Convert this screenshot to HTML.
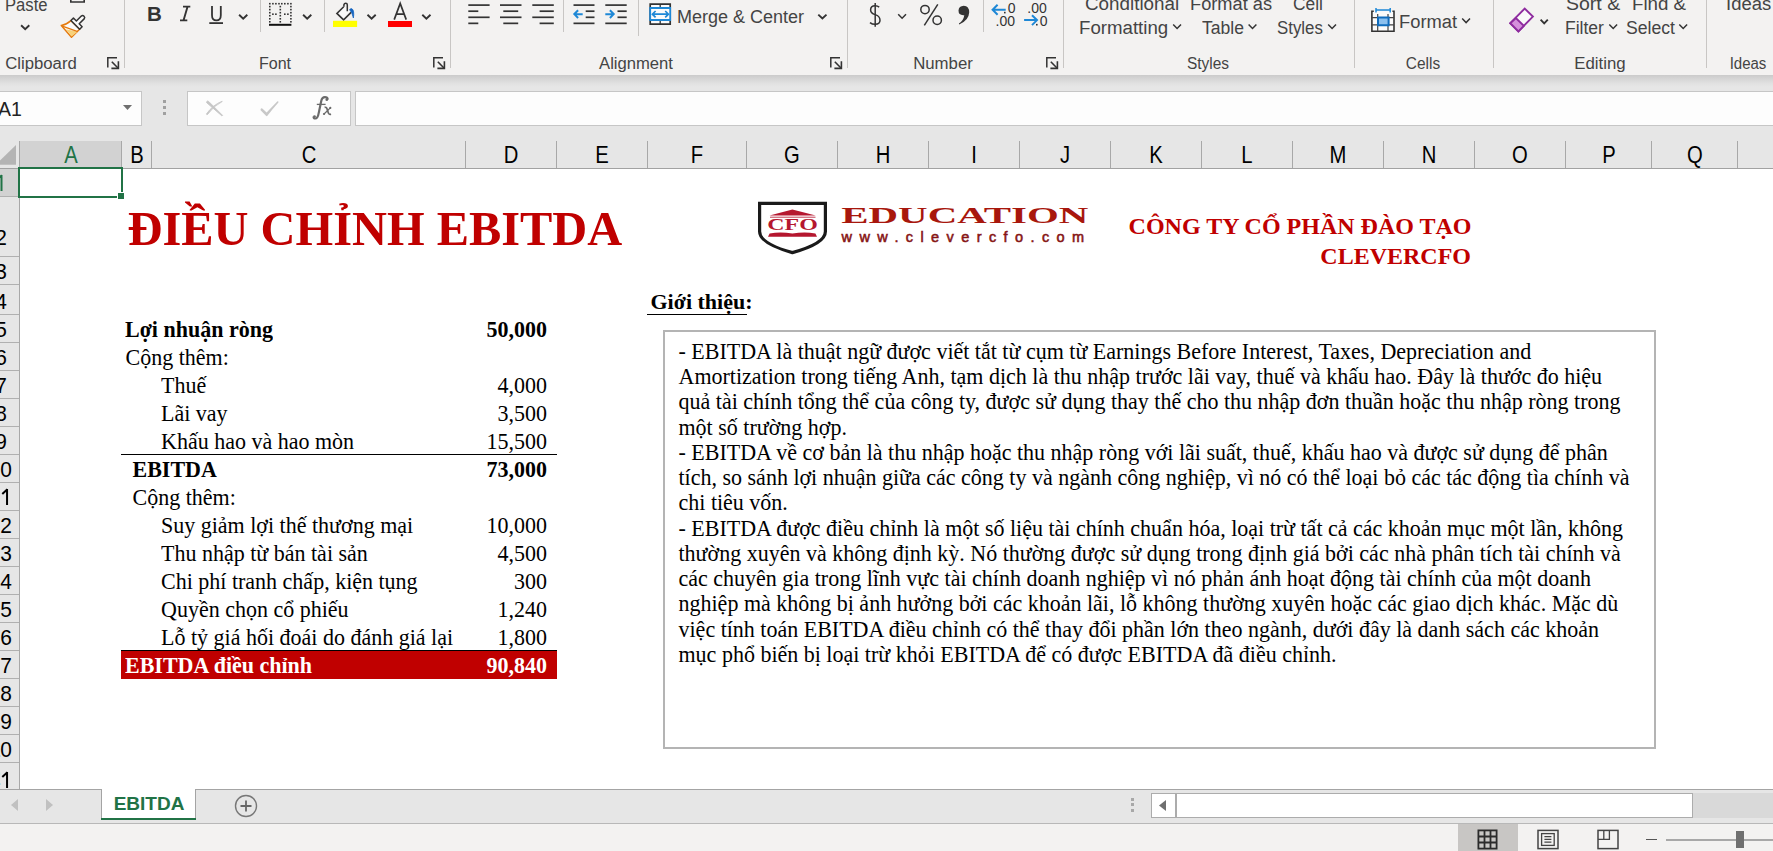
<!DOCTYPE html>
<html><head><meta charset="utf-8"><title>EBITDA</title>
<style>
html,body{margin:0;padding:0;}
body{width:1773px;height:851px;position:relative;overflow:hidden;background:#fff;font-family:"Liberation Sans",sans-serif;}
</style></head><body>
<div style="position:absolute;left:0px;top:0px;width:1773px;height:75px;background:#f3f2f1;"></div>
<div style="position:absolute;left:0px;top:75px;width:1773px;height:66px;background:linear-gradient(#cbcbcb 0px,#d3d3d3 3px,#dbdbdb 6px,#e2e2e2 9px,#e6e6e6 12px,#e6e6e6 100%);"></div>
<div style="position:absolute;left:124px;top:0px;width:1px;height:68px;background:#c8c6c4;"></div>
<div style="position:absolute;left:450px;top:0px;width:1px;height:68px;background:#c8c6c4;"></div>
<div style="position:absolute;left:847px;top:0px;width:1px;height:68px;background:#c8c6c4;"></div>
<div style="position:absolute;left:1063px;top:0px;width:1px;height:68px;background:#c8c6c4;"></div>
<div style="position:absolute;left:1354px;top:0px;width:1px;height:68px;background:#c8c6c4;"></div>
<div style="position:absolute;left:1493px;top:0px;width:1px;height:68px;background:#c8c6c4;"></div>
<div style="position:absolute;left:1706px;top:0px;width:1px;height:68px;background:#c8c6c4;"></div>
<div style="position:absolute;left:260px;top:0px;width:1px;height:32px;background:#c8c6c4;"></div>
<div style="position:absolute;left:324px;top:0px;width:1px;height:32px;background:#c8c6c4;"></div>
<div style="position:absolute;left:563px;top:0px;width:1px;height:32px;background:#c8c6c4;"></div>
<div style="position:absolute;left:983px;top:0px;width:1px;height:32px;background:#c8c6c4;"></div>
<div style="position:absolute;left:638px;top:0px;width:1px;height:36px;background:#c8c6c4;"></div>
<div style="position:absolute;left:-459px;width:1000px;text-align:center;top:63.66px;line-height:0;white-space:pre;font-family:'Liberation Sans', sans-serif;font-size:16px;color:#444444;font-weight:normal;font-style:normal;transform:scale(1.0453,1);transform-origin:center 5.54px;">Clipboard</div>
<div style="position:absolute;left:-225px;width:1000px;text-align:center;top:63.66px;line-height:0;white-space:pre;font-family:'Liberation Sans', sans-serif;font-size:16px;color:#444444;font-weight:normal;font-style:normal;transform:scale(1.0031,1);transform-origin:center 5.54px;">Font</div>
<div style="position:absolute;left:136px;width:1000px;text-align:center;top:63.66px;line-height:0;white-space:pre;font-family:'Liberation Sans', sans-serif;font-size:16px;color:#444444;font-weight:normal;font-style:normal;transform:scale(1.0388,1);transform-origin:center 5.54px;">Alignment</div>
<div style="position:absolute;left:442.5px;width:1000px;text-align:center;top:63.66px;line-height:0;white-space:pre;font-family:'Liberation Sans', sans-serif;font-size:16px;color:#444444;font-weight:normal;font-style:normal;transform:scale(1.0481,1);transform-origin:center 5.54px;">Number</div>
<div style="position:absolute;left:707.5px;width:1000px;text-align:center;top:63.66px;line-height:0;white-space:pre;font-family:'Liberation Sans', sans-serif;font-size:16px;color:#444444;font-weight:normal;font-style:normal;transform:scale(0.9656,1);transform-origin:center 5.54px;">Styles</div>
<div style="position:absolute;left:923px;width:1000px;text-align:center;top:63.66px;line-height:0;white-space:pre;font-family:'Liberation Sans', sans-serif;font-size:16px;color:#444444;font-weight:normal;font-style:normal;transform:scale(0.9656,1);transform-origin:center 5.54px;">Cells</div>
<div style="position:absolute;left:1099.5px;width:1000px;text-align:center;top:63.66px;line-height:0;white-space:pre;font-family:'Liberation Sans', sans-serif;font-size:16px;color:#444444;font-weight:normal;font-style:normal;transform:scale(1.05,1);transform-origin:center 5.54px;">Editing</div>
<div style="position:absolute;left:1248px;width:1000px;text-align:center;top:63.66px;line-height:0;white-space:pre;font-family:'Liberation Sans', sans-serif;font-size:16px;color:#444444;font-weight:normal;font-style:normal;transform:scale(0.9375,1);transform-origin:center 5.54px;">Ideas</div>
<div style="position:absolute;left:5px;top:4.74px;line-height:0;white-space:pre;font-family:'Liberation Sans', sans-serif;font-size:17.5px;color:#444444;font-weight:normal;font-style:normal;transform:scale(0.95,1);transform-origin:left 6.06px;">Paste</div>
<div style="position:absolute;left:147px;top:13.70px;line-height:0;white-space:pre;font-family:'Liberation Sans', sans-serif;font-size:20.5px;color:#333;font-weight:bold;font-style:normal;">B</div>
<div style="position:absolute;left:677px;top:16.76px;line-height:0;white-space:pre;font-family:'Liberation Sans', sans-serif;font-size:18px;color:#444444;font-weight:normal;font-style:normal;">Merge &amp; Center</div>
<div style="position:absolute;left:1085px;top:3.56px;line-height:0;white-space:pre;font-family:'Liberation Sans', sans-serif;font-size:18px;color:#444444;font-weight:normal;font-style:normal;transform:scale(1.046,1);transform-origin:left 6.24px;">Conditional</div>
<div style="position:absolute;left:1079px;top:27.56px;line-height:0;white-space:pre;font-family:'Liberation Sans', sans-serif;font-size:18px;color:#444444;font-weight:normal;font-style:normal;transform:scale(1.036,1);transform-origin:left 6.24px;">Formatting</div>
<div style="position:absolute;left:1190px;top:3.56px;line-height:0;white-space:pre;font-family:'Liberation Sans', sans-serif;font-size:18px;color:#444444;font-weight:normal;font-style:normal;transform:scale(1.013,1);transform-origin:left 6.24px;">Format as</div>
<div style="position:absolute;left:1202px;top:27.56px;line-height:0;white-space:pre;font-family:'Liberation Sans', sans-serif;font-size:18px;color:#444444;font-weight:normal;font-style:normal;transform:scale(0.976,1);transform-origin:left 6.24px;">Table</div>
<div style="position:absolute;left:1293px;top:3.56px;line-height:0;white-space:pre;font-family:'Liberation Sans', sans-serif;font-size:18px;color:#444444;font-weight:normal;font-style:normal;transform:scale(0.964,1);transform-origin:left 6.24px;">Cell</div>
<div style="position:absolute;left:1277px;top:27.56px;line-height:0;white-space:pre;font-family:'Liberation Sans', sans-serif;font-size:18px;color:#444444;font-weight:normal;font-style:normal;transform:scale(0.935,1);transform-origin:left 6.24px;">Styles</div>
<div style="position:absolute;left:1399px;top:21.76px;line-height:0;white-space:pre;font-family:'Liberation Sans', sans-serif;font-size:18px;color:#444444;font-weight:normal;font-style:normal;transform:scale(1.018,1);transform-origin:left 6.24px;">Format</div>
<div style="position:absolute;left:1566px;top:3.76px;line-height:0;white-space:pre;font-family:'Liberation Sans', sans-serif;font-size:18px;color:#444444;font-weight:normal;font-style:normal;transform:scale(1.083,1);transform-origin:left 6.24px;">Sort &amp;</div>
<div style="position:absolute;left:1565px;top:27.56px;line-height:0;white-space:pre;font-family:'Liberation Sans', sans-serif;font-size:18px;color:#444444;font-weight:normal;font-style:normal;transform:scale(0.974,1);transform-origin:left 6.24px;">Filter</div>
<div style="position:absolute;left:1632px;top:3.76px;line-height:0;white-space:pre;font-family:'Liberation Sans', sans-serif;font-size:18px;color:#444444;font-weight:normal;font-style:normal;transform:scale(1.04,1);transform-origin:left 6.24px;">Find &amp;</div>
<div style="position:absolute;left:1626px;top:27.56px;line-height:0;white-space:pre;font-family:'Liberation Sans', sans-serif;font-size:18px;color:#444444;font-weight:normal;font-style:normal;transform:scale(0.979,1);transform-origin:left 6.24px;">Select</div>
<div style="position:absolute;left:1726px;top:3.76px;line-height:0;white-space:pre;font-family:'Liberation Sans', sans-serif;font-size:18px;color:#444444;font-weight:normal;font-style:normal;transform:scale(1.025,1);transform-origin:left 6.24px;">Ideas</div>
<svg style="position:absolute;left:0;top:0" width="1773" height="80" viewBox="0 0 1773 80"><path d="M107.8 67.6 V57.8 H117.0" fill="none" stroke="#333" stroke-width="1.5" /><path d="M111.8 61.8 L118.0 68" fill="none" stroke="#333" stroke-width="1.6" /><path d="M118.39999999999999 61.3 V68.4 H111.39999999999999" fill="none" stroke="#333" stroke-width="1.6" /><path d="M433.8 67.6 V57.8 H443.0" fill="none" stroke="#333" stroke-width="1.5" /><path d="M437.8 61.8 L444.0 68" fill="none" stroke="#333" stroke-width="1.6" /><path d="M444.40000000000003 61.3 V68.4 H437.40000000000003" fill="none" stroke="#333" stroke-width="1.6" /><path d="M830.8 67.6 V57.8 H840.0" fill="none" stroke="#333" stroke-width="1.5" /><path d="M834.8 61.8 L841.0 68" fill="none" stroke="#333" stroke-width="1.6" /><path d="M841.4 61.3 V68.4 H834.4" fill="none" stroke="#333" stroke-width="1.6" /><path d="M1046.8 67.6 V57.8 H1056.0" fill="none" stroke="#333" stroke-width="1.5" /><path d="M1050.8 61.8 L1057.0 68" fill="none" stroke="#333" stroke-width="1.6" /><path d="M1057.3999999999999 61.3 V68.4 H1050.3999999999999" fill="none" stroke="#333" stroke-width="1.6" /><path d="M21.1 25.2 L25.200000000000003 29.099999999999998 L29.3 25.2" fill="none" stroke="#333" stroke-width="1.9" stroke-linecap="butt" stroke-linejoin="miter"/><path d="M70.8 0 V2 H84.2 V0" fill="none" stroke="#333" stroke-width="1.6" /><path d="M61.3 25.4 Q66 24.8 71 20.6 L79.6 29.3 L71.5 37.2 Z" fill="#fbfbfb" stroke="#e57a0e" stroke-width="1.5" stroke-linejoin="round"/><path d="M66 29.2 L77.6 31.8 L71.5 36.4 Z" fill="#f8d27a" stroke="none" stroke-width="0" /><path d="M62.3 26.2 L77.8 31.6" fill="none" stroke="#e57a0e" stroke-width="1.4" /><path d="M70.95 20.55 L73.42 18.08 L76.36 21.02 L81.31 16.07 A2 2 0 0 1 84.13 18.89 L79.18 23.84 L82.12 26.78 L79.65 29.25 Z" fill="#fbfbfb" stroke="#333" stroke-width="1.5" stroke-linejoin="round"/><path d="M183 6.6 H190.3 M180 20.4 H187.3 M187.6 6.6 L183.5 20.4" fill="none" stroke="#333" stroke-width="1.9" /><path d="M212 6 V15.2 Q212 20.4 216.4 20.4 Q220.8 20.4 220.8 15.2 V6" fill="none" stroke="#333" stroke-width="1.8" /><rect x="209.3" y="22.2" width="13.7" height="1.8" fill="#333"/><path d="M239.1 14.7 L243.2 18.599999999999998 L247.29999999999998 14.7" fill="none" stroke="#333" stroke-width="1.9" stroke-linecap="butt" stroke-linejoin="miter"/><rect x="269.0" y="2.9" width="1.6" height="1.6" fill="#333"/><rect x="272.09999999999997" y="2.9" width="1.6" height="1.6" fill="#333"/><rect x="275.09999999999997" y="2.9" width="1.6" height="1.6" fill="#333"/><rect x="278.2" y="2.9" width="1.6" height="1.6" fill="#333"/><rect x="281.0" y="2.9" width="1.6" height="1.6" fill="#333"/><rect x="284.0" y="2.9" width="1.6" height="1.6" fill="#333"/><rect x="287.09999999999997" y="2.9" width="1.6" height="1.6" fill="#333"/><rect x="290.09999999999997" y="2.9" width="1.6" height="1.6" fill="#333"/><rect x="269.0" y="5.8" width="1.6" height="1.6" fill="#333"/><rect x="290.1" y="5.8" width="1.6" height="1.6" fill="#333"/><rect x="279.5" y="5.8" width="1.6" height="1.6" fill="#333"/><rect x="269.0" y="8.799999999999999" width="1.6" height="1.6" fill="#333"/><rect x="290.1" y="8.799999999999999" width="1.6" height="1.6" fill="#333"/><rect x="279.5" y="8.799999999999999" width="1.6" height="1.6" fill="#333"/><rect x="269.0" y="11.899999999999999" width="1.6" height="1.6" fill="#333"/><rect x="290.1" y="11.899999999999999" width="1.6" height="1.6" fill="#333"/><rect x="279.5" y="11.899999999999999" width="1.6" height="1.6" fill="#333"/><rect x="269.0" y="14.899999999999999" width="1.6" height="1.6" fill="#333"/><rect x="290.1" y="14.899999999999999" width="1.6" height="1.6" fill="#333"/><rect x="279.5" y="14.899999999999999" width="1.6" height="1.6" fill="#333"/><rect x="269.0" y="18.0" width="1.6" height="1.6" fill="#333"/><rect x="290.1" y="18.0" width="1.6" height="1.6" fill="#333"/><rect x="279.5" y="18.0" width="1.6" height="1.6" fill="#333"/><rect x="269.0" y="21.0" width="1.6" height="1.6" fill="#333"/><rect x="290.1" y="21.0" width="1.6" height="1.6" fill="#333"/><rect x="279.5" y="21.0" width="1.6" height="1.6" fill="#333"/><rect x="272.09999999999997" y="13.4" width="1.6" height="1.6" fill="#333"/><rect x="275.09999999999997" y="13.4" width="1.6" height="1.6" fill="#333"/><rect x="284.0" y="13.4" width="1.6" height="1.6" fill="#333"/><rect x="287.09999999999997" y="13.4" width="1.6" height="1.6" fill="#333"/><rect x="269" y="23.8" width="22.4" height="2" fill="#111"/><path d="M303.1 14.7 L307.20000000000005 18.599999999999998 L311.3 14.7" fill="none" stroke="#333" stroke-width="1.9" stroke-linecap="butt" stroke-linejoin="miter"/><path d="M343.7 6.7 L336.9 13.4 L343.6 19.9 L351.1 12.4" fill="#f9f9f9" stroke="#333" stroke-width="1.6" stroke-linejoin="miter"/><path d="M343.9 6.8 V4.8 Q344.3 3.2 345.7 3.2 Q347.3 3.2 347.3 4.8 V11.3" fill="none" stroke="#333" stroke-width="1.5" /><path d="M349.6 9.6 Q350.5 8.3 352 8.8 Q354.5 10.5 353.4 18 Q352.3 12.5 349.6 9.6 Z" fill="#1565c0" stroke="#1565c0" stroke-width="0.8" /><rect x="333" y="20.8" width="24.1" height="6.2" fill="#ffff00"/><path d="M367.5 14.7 L371.6 18.599999999999998 L375.7 14.7" fill="none" stroke="#333" stroke-width="1.9" stroke-linecap="butt" stroke-linejoin="miter"/><path d="M394.2 19.6 L400.2 3.4 L406.2 19.6 M396.4 14.1 H404" fill="none" stroke="#333" stroke-width="1.7" /><rect x="388" y="21" width="24" height="6" fill="#ff0000"/><path d="M422.3 14.7 L426.40000000000003 18.599999999999998 L430.5 14.7" fill="none" stroke="#333" stroke-width="1.9" stroke-linecap="butt" stroke-linejoin="miter"/><rect x="468.3" y="4.25" width="21.3" height="1.7" fill="#333"/><rect x="468.3" y="10.35" width="10" height="1.7" fill="#333"/><rect x="468.3" y="16.45" width="21.3" height="1.7" fill="#333"/><rect x="468.3" y="22.5" width="10" height="1.7" fill="#333"/><rect x="500" y="4.25" width="21.5" height="1.7" fill="#333"/><rect x="503.3" y="10.35" width="14.899999999999999" height="1.7" fill="#333"/><rect x="500" y="16.45" width="21.5" height="1.7" fill="#333"/><rect x="503.3" y="22.5" width="14.899999999999999" height="1.7" fill="#333"/><rect x="532.3" y="4.25" width="21.5" height="1.7" fill="#333"/><rect x="539.5999999999999" y="10.35" width="14.2" height="1.7" fill="#333"/><rect x="532.3" y="16.45" width="21.5" height="1.7" fill="#333"/><rect x="539.5999999999999" y="22.5" width="14.2" height="1.7" fill="#333"/><rect x="573.5" y="4.25" width="21" height="1.7" fill="#333"/><rect x="585.7" y="10.35" width="8.8" height="1.7" fill="#333"/><rect x="585.7" y="16.45" width="8.8" height="1.7" fill="#333"/><rect x="573.5" y="22.5" width="21" height="1.7" fill="#333"/><path d="M582.7 14.2 H574.3 M578.1 10.2 L574.3 14.1 L578.1 18" fill="none" stroke="#1e88d6" stroke-width="2" /><rect x="605.3" y="4.25" width="21.4" height="1.7" fill="#333"/><rect x="617.5" y="10.35" width="9.2" height="1.7" fill="#333"/><rect x="617.5" y="16.45" width="9.2" height="1.7" fill="#333"/><rect x="605.3" y="22.5" width="21.4" height="1.7" fill="#333"/><path d="M605.3 14.2 H613.5 M609.9 10.2 L613.6999999999999 14.1 L609.9 18" fill="none" stroke="#1e88d6" stroke-width="2" /><path d="M650.2 4.2 H670.2 V24.2 H650.2 Z" fill="#fbfbfb" stroke="#333" stroke-width="1.7" /><path d="M660.2 4.2 V7.5 M660.2 20.5 V24.2" fill="none" stroke="#333" stroke-width="1.3" /><path d="M650.2 8 H670.2 V20 H650.2 Z" fill="#fbfbfb" stroke="#1e88d6" stroke-width="1.8" /><path d="M652.6 14.2 H668 M655.6 11 L652.4 14.2 L655.6 17.4 M665.2 11 L668.4 14.2 L665.2 17.4" fill="none" stroke="#1e88d6" stroke-width="1.7" /><path d="M818.3 14.6 L822.4 18.5 L826.5 14.6" fill="none" stroke="#333" stroke-width="1.9" stroke-linecap="butt" stroke-linejoin="miter"/><path d="M875.2 3 V26.7" fill="none" stroke="#333" stroke-width="1.5" /><path d="M879.2 7.2 Q877.5 5.8 875.2 5.8 Q870.6 5.8 870.6 10 Q870.6 13.2 875.2 14.6 Q880 16 880 20.3 Q880 24.3 875.2 24.3 Q872 24.3 870 22.6" fill="none" stroke="#333" stroke-width="1.5" /><path d="M898.2 14.2 L902.1 18.2 L906.0 14.2" fill="none" stroke="#333" stroke-width="1.5" stroke-linecap="butt" stroke-linejoin="miter"/><circle cx="925" cy="9.6" r="4.2" fill="none" stroke="#333" stroke-width="1.5"/><circle cx="937.2" cy="20.2" r="4.2" fill="none" stroke="#333" stroke-width="1.5"/><path d="M937.8 4.4 L924.3 25.4" fill="none" stroke="#333" stroke-width="1.5" /><path d="M963.8 5.8 Q969.2 6 969.2 12.5 Q968.8 20.5 959.2 24.4 L958.9 23.6 Q963.5 20.5 964.3 15.2 Q958.5 15.8 958.5 10.6 Q958.8 6 963.8 5.8 Z" fill="#333" stroke="none" stroke-width="0" /><path d="M1005.7 9.7 H992.6 M997.6 4.7 L992.6 9.7 L997.6 14.7" fill="none" stroke="#1e88d6" stroke-width="2" /><text x="1007.8" y="13.4" font-family="Liberation Sans" font-size="14" fill="#333" text-anchor="start" >0</text><rect x="1004" y="11.8" width="1.6" height="1.6" fill="#333"/><text x="995.5" y="25.5" font-family="Liberation Sans" font-size="14" fill="#333" text-anchor="start" >.00</text><text x="1027.3" y="13.4" font-family="Liberation Sans" font-size="14" fill="#333" text-anchor="start" >.00</text><path d="M1024.1 20.1 H1037 M1032 15.2 L1037 20.1 L1032 25.1" fill="none" stroke="#1e88d6" stroke-width="2" /><text x="1039.8" y="25.5" font-family="Liberation Sans" font-size="14" fill="#333" text-anchor="start" >0</text><rect x="1036" y="23.9" width="1.6" height="1.6" fill="#333"/><path d="M1173.2 24.4 L1177.1000000000001 28.4 L1181.0 24.4" fill="none" stroke="#333" stroke-width="1.5" stroke-linecap="butt" stroke-linejoin="miter"/><path d="M1248.6 24.4 L1252.5 28.4 L1256.3999999999999 24.4" fill="none" stroke="#333" stroke-width="1.5" stroke-linecap="butt" stroke-linejoin="miter"/><path d="M1328.2 24.4 L1332.1000000000001 28.4 L1336.0 24.4" fill="none" stroke="#333" stroke-width="1.5" stroke-linecap="butt" stroke-linejoin="miter"/><path d="M1373.8 11.3 H1371.9 V31.2 H1394 V11.3 H1392.4" fill="#fbfbfb" stroke="#333" stroke-width="1.6" /><path d="M1371.9 17.6 H1394 M1371.9 24.9 H1394 M1377.7 14.1 V31.2 M1388 14.1 V31.2" fill="none" stroke="#444" stroke-width="1.2" /><path d="M1378 17.6 H1388.6 V25.2 H1378 Z" fill="#8bc0ee" stroke="#0f6cbd" stroke-width="2" /><path d="M1376 9.9 H1390.2 M1376 8 V12.4 M1390.2 8 V12.4" fill="none" stroke="#1e88d6" stroke-width="1.5" /><path d="M1462.2 18.6 L1466.1000000000001 22.6 L1470.0 18.6" fill="none" stroke="#333" stroke-width="1.5" stroke-linecap="butt" stroke-linejoin="miter"/><path d="M1510.3 23.2 L1524.7 8.5 L1532.9 16.6 L1518.4 31.3 Z" fill="#fafafa" stroke="#8e2c9f" stroke-width="1.9" stroke-linejoin="miter"/><path d="M1510.3 23.2 L1515.9 18.0 L1523.8 25.8 L1518.4 31.3 Z" fill="#d590dc" stroke="#8e2c9f" stroke-width="1.9" stroke-linejoin="miter"/><path d="M1540.6 19.7 L1544.1999999999998 23.3 L1547.8 19.7" fill="none" stroke="#333" stroke-width="1.9" stroke-linecap="butt" stroke-linejoin="miter"/><path d="M1609.3 24.4 L1613.2 28.4 L1617.1 24.4" fill="none" stroke="#333" stroke-width="1.5" stroke-linecap="butt" stroke-linejoin="miter"/><path d="M1679.3 24.4 L1683.2 28.4 L1687.1 24.4" fill="none" stroke="#333" stroke-width="1.5" stroke-linecap="butt" stroke-linejoin="miter"/></svg>
<div style="position:absolute;left:-2px;top:91px;width:142px;height:33px;background:#fdfdfd;border:1px solid #c6c6c6;"></div>
<div style="position:absolute;left:-2px;top:109.24px;line-height:0;white-space:pre;font-family:'Liberation Sans', sans-serif;font-size:19.5px;color:#222;font-weight:normal;font-style:normal;">A1</div>
<svg style="position:absolute;left:123px;top:105px;" width="9" height="6" viewBox="0 0 9 6"><path d="M0 0 H9 L4.5 5 Z" fill="#6f6f6f"/></svg>
<div style="position:absolute;left:163px;top:100px;width:3px;height:3px;background:#a0a0a0;"></div>
<div style="position:absolute;left:163px;top:106px;width:3px;height:3px;background:#a0a0a0;"></div>
<div style="position:absolute;left:163px;top:112px;width:3px;height:3px;background:#a0a0a0;"></div>
<div style="position:absolute;left:187px;top:91px;width:162px;height:33px;background:#fdfdfd;border:1px solid #c6c6c6;"></div>
<svg style="position:absolute;left:200px;top:95px;" width="30" height="25" viewBox="0 0 30 25"><g transform="translate(-200 -95)"><path d="M206.6 101.8 Q207.6 100.4 208.6 101.4 L222.6 115.4 L221.8 115.8 L206.8 102.8 Z" fill="#c6c6c6" stroke="#c6c6c6" stroke-width="0.9"/><path d="M222.3 101.5 Q214 105.5 207.6 114.4 Q206.6 115.2 206.5 113.8 Q213 104.8 222.1 101.2 Z" fill="#c6c6c6" stroke="#c6c6c6" stroke-width="0.8"/></g></svg>
<svg style="position:absolute;left:255px;top:95px;" width="30" height="25" viewBox="0 0 30 25"><g transform="translate(-255 -95)"><path d="M260.6 108.9 Q261.5 107.8 262.6 108.8 L266.6 112.6 L277.2 101.6 Q278.6 100.6 278.4 102.4 Q272 109.5 267.4 115.8 Q266.8 116.6 266 115.8 L260.6 110.2 Z" fill="#c8c8c8"/></g></svg>
<svg style="position:absolute;left:300px;top:92px;" width="40" height="32" viewBox="0 0 40 32"><g transform="translate(-300 -92)"><path d="M327.8 99.6 Q327.4 97.2 325 97.2 Q322 97.2 321.2 101.2 L318.8 112.6 Q317.8 118.5 315.2 118.5 Q313.4 118.5 313.6 116.6" fill="none" stroke="#6a6a6a" stroke-width="2.2"/><circle cx="326.8" cy="99.7" r="1.35" fill="#6a6a6a"/><circle cx="314.5" cy="116.5" r="1.35" fill="#6a6a6a"/><path d="M316.8 104.4 H325.6" stroke="#6a6a6a" stroke-width="1.3"/><path d="M324.6 107.4 Q326.4 106.8 327 108.8 L328.2 112.6 Q328.9 114.9 331 114.1" fill="none" stroke="#6a6a6a" stroke-width="1.7"/><path d="M330.6 107.6 L323.8 114.3" stroke="#6a6a6a" stroke-width="1.2"/><circle cx="330.3" cy="107.9" r="1.1" fill="#6a6a6a"/><circle cx="324" cy="114" r="1.1" fill="#6a6a6a"/></g></svg>
<div style="position:absolute;left:355px;top:91px;width:1430px;height:33px;background:#fdfdfd;border:1px solid #c6c6c6;"></div>
<div style="position:absolute;left:0px;top:141px;width:1773px;height:27px;background:#e6e6e6;"></div>
<div style="position:absolute;left:20px;top:141px;width:101px;height:27px;background:#d2d2d2;"></div>
<div style="position:absolute;left:0px;top:168px;width:1773px;height:1px;background:#a2a2a2;"></div>
<svg style="position:absolute;left:0px;top:144px;" width="17" height="22" viewBox="0 0 17 22"><path d="M16 1 V20.8 H-4.5 Z" fill="#b4b4b4"/></svg>
<div style="position:absolute;left:19px;top:141px;width:1px;height:27px;background:#a8a8a8;"></div>
<div style="position:absolute;left:121px;top:141px;width:1px;height:27px;background:#a8a8a8;"></div>
<div style="position:absolute;left:151px;top:141px;width:1px;height:27px;background:#a8a8a8;"></div>
<div style="position:absolute;left:465px;top:141px;width:1px;height:27px;background:#a8a8a8;"></div>
<div style="position:absolute;left:556px;top:141px;width:1px;height:27px;background:#a8a8a8;"></div>
<div style="position:absolute;left:647px;top:141px;width:1px;height:27px;background:#a8a8a8;"></div>
<div style="position:absolute;left:746px;top:141px;width:1px;height:27px;background:#a8a8a8;"></div>
<div style="position:absolute;left:837px;top:141px;width:1px;height:27px;background:#a8a8a8;"></div>
<div style="position:absolute;left:928px;top:141px;width:1px;height:27px;background:#a8a8a8;"></div>
<div style="position:absolute;left:1019px;top:141px;width:1px;height:27px;background:#a8a8a8;"></div>
<div style="position:absolute;left:1110px;top:141px;width:1px;height:27px;background:#a8a8a8;"></div>
<div style="position:absolute;left:1201px;top:141px;width:1px;height:27px;background:#a8a8a8;"></div>
<div style="position:absolute;left:1292px;top:141px;width:1px;height:27px;background:#a8a8a8;"></div>
<div style="position:absolute;left:1383px;top:141px;width:1px;height:27px;background:#a8a8a8;"></div>
<div style="position:absolute;left:1474px;top:141px;width:1px;height:27px;background:#a8a8a8;"></div>
<div style="position:absolute;left:1565px;top:141px;width:1px;height:27px;background:#a8a8a8;"></div>
<div style="position:absolute;left:1651px;top:141px;width:1px;height:27px;background:#a8a8a8;"></div>
<div style="position:absolute;left:1737px;top:141px;width:1px;height:27px;background:#a8a8a8;"></div>
<div style="position:absolute;left:-429.5px;width:1000px;text-align:center;top:155.68px;line-height:0;white-space:pre;font-family:'Liberation Sans', sans-serif;font-size:22px;color:#217346;font-weight:normal;font-style:normal;transform:scale(0.92,1.08);transform-origin:center 7.62px;">A</div>
<div style="position:absolute;left:-363.5px;width:1000px;text-align:center;top:155.68px;line-height:0;white-space:pre;font-family:'Liberation Sans', sans-serif;font-size:22px;color:#000;font-weight:normal;font-style:normal;transform:scale(0.92,1.08);transform-origin:center 7.62px;">B</div>
<div style="position:absolute;left:-191.5px;width:1000px;text-align:center;top:155.68px;line-height:0;white-space:pre;font-family:'Liberation Sans', sans-serif;font-size:22px;color:#000;font-weight:normal;font-style:normal;transform:scale(0.92,1.08);transform-origin:center 7.62px;">C</div>
<div style="position:absolute;left:11.0px;width:1000px;text-align:center;top:155.68px;line-height:0;white-space:pre;font-family:'Liberation Sans', sans-serif;font-size:22px;color:#000;font-weight:normal;font-style:normal;transform:scale(0.92,1.08);transform-origin:center 7.62px;">D</div>
<div style="position:absolute;left:102.0px;width:1000px;text-align:center;top:155.68px;line-height:0;white-space:pre;font-family:'Liberation Sans', sans-serif;font-size:22px;color:#000;font-weight:normal;font-style:normal;transform:scale(0.92,1.08);transform-origin:center 7.62px;">E</div>
<div style="position:absolute;left:197.0px;width:1000px;text-align:center;top:155.68px;line-height:0;white-space:pre;font-family:'Liberation Sans', sans-serif;font-size:22px;color:#000;font-weight:normal;font-style:normal;transform:scale(0.92,1.08);transform-origin:center 7.62px;">F</div>
<div style="position:absolute;left:292.0px;width:1000px;text-align:center;top:155.68px;line-height:0;white-space:pre;font-family:'Liberation Sans', sans-serif;font-size:22px;color:#000;font-weight:normal;font-style:normal;transform:scale(0.92,1.08);transform-origin:center 7.62px;">G</div>
<div style="position:absolute;left:383.0px;width:1000px;text-align:center;top:155.68px;line-height:0;white-space:pre;font-family:'Liberation Sans', sans-serif;font-size:22px;color:#000;font-weight:normal;font-style:normal;transform:scale(0.92,1.08);transform-origin:center 7.62px;">H</div>
<div style="position:absolute;left:474.0px;width:1000px;text-align:center;top:155.68px;line-height:0;white-space:pre;font-family:'Liberation Sans', sans-serif;font-size:22px;color:#000;font-weight:normal;font-style:normal;transform:scale(0.92,1.08);transform-origin:center 7.62px;">I</div>
<div style="position:absolute;left:565.0px;width:1000px;text-align:center;top:155.68px;line-height:0;white-space:pre;font-family:'Liberation Sans', sans-serif;font-size:22px;color:#000;font-weight:normal;font-style:normal;transform:scale(0.92,1.08);transform-origin:center 7.62px;">J</div>
<div style="position:absolute;left:656.0px;width:1000px;text-align:center;top:155.68px;line-height:0;white-space:pre;font-family:'Liberation Sans', sans-serif;font-size:22px;color:#000;font-weight:normal;font-style:normal;transform:scale(0.92,1.08);transform-origin:center 7.62px;">K</div>
<div style="position:absolute;left:747.0px;width:1000px;text-align:center;top:155.68px;line-height:0;white-space:pre;font-family:'Liberation Sans', sans-serif;font-size:22px;color:#000;font-weight:normal;font-style:normal;transform:scale(0.92,1.08);transform-origin:center 7.62px;">L</div>
<div style="position:absolute;left:838.0px;width:1000px;text-align:center;top:155.68px;line-height:0;white-space:pre;font-family:'Liberation Sans', sans-serif;font-size:22px;color:#000;font-weight:normal;font-style:normal;transform:scale(0.92,1.08);transform-origin:center 7.62px;">M</div>
<div style="position:absolute;left:929.0px;width:1000px;text-align:center;top:155.68px;line-height:0;white-space:pre;font-family:'Liberation Sans', sans-serif;font-size:22px;color:#000;font-weight:normal;font-style:normal;transform:scale(0.92,1.08);transform-origin:center 7.62px;">N</div>
<div style="position:absolute;left:1020.0px;width:1000px;text-align:center;top:155.68px;line-height:0;white-space:pre;font-family:'Liberation Sans', sans-serif;font-size:22px;color:#000;font-weight:normal;font-style:normal;transform:scale(0.92,1.08);transform-origin:center 7.62px;">O</div>
<div style="position:absolute;left:1108.5px;width:1000px;text-align:center;top:155.68px;line-height:0;white-space:pre;font-family:'Liberation Sans', sans-serif;font-size:22px;color:#000;font-weight:normal;font-style:normal;transform:scale(0.92,1.08);transform-origin:center 7.62px;">P</div>
<div style="position:absolute;left:1194.5px;width:1000px;text-align:center;top:155.68px;line-height:0;white-space:pre;font-family:'Liberation Sans', sans-serif;font-size:22px;color:#000;font-weight:normal;font-style:normal;transform:scale(0.92,1.08);transform-origin:center 7.62px;">Q</div>
<div style="position:absolute;left:0px;top:169px;width:1773px;height:620px;background:#ffffff;"></div>
<div style="position:absolute;left:0px;top:169px;width:19px;height:620px;background:#e6e6e6;"></div>
<div style="position:absolute;left:0px;top:169px;width:19px;height:27px;background:#d2d2d2;"></div>
<div style="position:absolute;left:19px;top:141px;width:1px;height:648px;background:#a8a8a8;"></div>
<div style="position:absolute;left:0px;top:196px;width:19px;height:1px;background:#b0b0b0;"></div>
<div style="position:absolute;left:0px;top:256px;width:19px;height:1px;background:#b0b0b0;"></div>
<div style="position:absolute;left:0px;top:284px;width:19px;height:1px;background:#b0b0b0;"></div>
<div style="position:absolute;left:0px;top:314px;width:19px;height:1px;background:#b0b0b0;"></div>
<div style="position:absolute;left:0px;top:342px;width:19px;height:1px;background:#b0b0b0;"></div>
<div style="position:absolute;left:0px;top:370px;width:19px;height:1px;background:#b0b0b0;"></div>
<div style="position:absolute;left:0px;top:398px;width:19px;height:1px;background:#b0b0b0;"></div>
<div style="position:absolute;left:0px;top:426px;width:19px;height:1px;background:#b0b0b0;"></div>
<div style="position:absolute;left:0px;top:454px;width:19px;height:1px;background:#b0b0b0;"></div>
<div style="position:absolute;left:0px;top:482px;width:19px;height:1px;background:#b0b0b0;"></div>
<div style="position:absolute;left:0px;top:510px;width:19px;height:1px;background:#b0b0b0;"></div>
<div style="position:absolute;left:0px;top:538px;width:19px;height:1px;background:#b0b0b0;"></div>
<div style="position:absolute;left:0px;top:566px;width:19px;height:1px;background:#b0b0b0;"></div>
<div style="position:absolute;left:0px;top:594px;width:19px;height:1px;background:#b0b0b0;"></div>
<div style="position:absolute;left:0px;top:622px;width:19px;height:1px;background:#b0b0b0;"></div>
<div style="position:absolute;left:0px;top:650px;width:19px;height:1px;background:#b0b0b0;"></div>
<div style="position:absolute;left:0px;top:678px;width:19px;height:1px;background:#b0b0b0;"></div>
<div style="position:absolute;left:0px;top:706px;width:19px;height:1px;background:#b0b0b0;"></div>
<div style="position:absolute;left:0px;top:734px;width:19px;height:1px;background:#b0b0b0;"></div>
<div style="position:absolute;left:0px;top:762px;width:19px;height:1px;background:#b0b0b0;"></div>
<svg style="position:absolute;left:-5px;top:174px;" width="12" height="19" viewBox="0 0 12 19"><path d="M6.50 0.9 V17.1 M6.85 1.2 L1.75 5.9" fill="none" stroke="#217346" stroke-width="2" stroke-linecap="butt"/></svg>
<div style="position:absolute;left:-499.5px;width:1000px;text-align:center;top:238.48px;line-height:0;white-space:pre;font-family:'Liberation Sans', sans-serif;font-size:22px;color:#000;font-weight:normal;font-style:normal;transform:scale(0.95,1.03);transform-origin:center 7.62px;">2</div>
<div style="position:absolute;left:-499.5px;width:1000px;text-align:center;top:272.08px;line-height:0;white-space:pre;font-family:'Liberation Sans', sans-serif;font-size:22px;color:#000;font-weight:normal;font-style:normal;transform:scale(0.95,1.03);transform-origin:center 7.62px;">3</div>
<div style="position:absolute;left:-499.5px;width:1000px;text-align:center;top:302.08px;line-height:0;white-space:pre;font-family:'Liberation Sans', sans-serif;font-size:22px;color:#000;font-weight:normal;font-style:normal;transform:scale(0.95,1.03);transform-origin:center 7.62px;">4</div>
<div style="position:absolute;left:-499.5px;width:1000px;text-align:center;top:330.08px;line-height:0;white-space:pre;font-family:'Liberation Sans', sans-serif;font-size:22px;color:#000;font-weight:normal;font-style:normal;transform:scale(0.95,1.03);transform-origin:center 7.62px;">5</div>
<div style="position:absolute;left:-499.5px;width:1000px;text-align:center;top:358.08px;line-height:0;white-space:pre;font-family:'Liberation Sans', sans-serif;font-size:22px;color:#000;font-weight:normal;font-style:normal;transform:scale(0.95,1.03);transform-origin:center 7.62px;">6</div>
<div style="position:absolute;left:-499.5px;width:1000px;text-align:center;top:386.08px;line-height:0;white-space:pre;font-family:'Liberation Sans', sans-serif;font-size:22px;color:#000;font-weight:normal;font-style:normal;transform:scale(0.95,1.03);transform-origin:center 7.62px;">7</div>
<div style="position:absolute;left:-499.5px;width:1000px;text-align:center;top:414.08px;line-height:0;white-space:pre;font-family:'Liberation Sans', sans-serif;font-size:22px;color:#000;font-weight:normal;font-style:normal;transform:scale(0.95,1.03);transform-origin:center 7.62px;">8</div>
<div style="position:absolute;left:-499.5px;width:1000px;text-align:center;top:442.08px;line-height:0;white-space:pre;font-family:'Liberation Sans', sans-serif;font-size:22px;color:#000;font-weight:normal;font-style:normal;transform:scale(0.95,1.03);transform-origin:center 7.62px;">9</div>
<svg style="position:absolute;left:-11px;top:460px;" width="12" height="19" viewBox="0 0 12 19"><path d="M6.95 0.9 V17.1 M7.30 1.2 L2.20 5.9" fill="none" stroke="#000" stroke-width="2" stroke-linecap="butt"/></svg>
<div style="position:absolute;left:-493.95px;width:1000px;text-align:center;top:470.08px;line-height:0;white-space:pre;font-family:'Liberation Sans', sans-serif;font-size:22px;color:#000;font-weight:normal;font-style:normal;transform:scale(0.95,1.03);transform-origin:center 7.62px;">0</div>
<svg style="position:absolute;left:-11px;top:488px;" width="12" height="19" viewBox="0 0 12 19"><path d="M6.95 0.9 V17.1 M7.30 1.2 L2.20 5.9" fill="none" stroke="#000" stroke-width="2" stroke-linecap="butt"/></svg>
<svg style="position:absolute;left:0px;top:488px;" width="12" height="19" viewBox="0 0 12 19"><path d="M7.05 0.9 V17.1 M7.40 1.2 L2.30 5.9" fill="none" stroke="#000" stroke-width="2" stroke-linecap="butt"/></svg>
<svg style="position:absolute;left:-11px;top:516px;" width="12" height="19" viewBox="0 0 12 19"><path d="M6.95 0.9 V17.1 M7.30 1.2 L2.20 5.9" fill="none" stroke="#000" stroke-width="2" stroke-linecap="butt"/></svg>
<div style="position:absolute;left:-493.95px;width:1000px;text-align:center;top:526.08px;line-height:0;white-space:pre;font-family:'Liberation Sans', sans-serif;font-size:22px;color:#000;font-weight:normal;font-style:normal;transform:scale(0.95,1.03);transform-origin:center 7.62px;">2</div>
<svg style="position:absolute;left:-11px;top:544px;" width="12" height="19" viewBox="0 0 12 19"><path d="M6.95 0.9 V17.1 M7.30 1.2 L2.20 5.9" fill="none" stroke="#000" stroke-width="2" stroke-linecap="butt"/></svg>
<div style="position:absolute;left:-493.95px;width:1000px;text-align:center;top:554.08px;line-height:0;white-space:pre;font-family:'Liberation Sans', sans-serif;font-size:22px;color:#000;font-weight:normal;font-style:normal;transform:scale(0.95,1.03);transform-origin:center 7.62px;">3</div>
<svg style="position:absolute;left:-11px;top:572px;" width="12" height="19" viewBox="0 0 12 19"><path d="M6.95 0.9 V17.1 M7.30 1.2 L2.20 5.9" fill="none" stroke="#000" stroke-width="2" stroke-linecap="butt"/></svg>
<div style="position:absolute;left:-493.95px;width:1000px;text-align:center;top:582.08px;line-height:0;white-space:pre;font-family:'Liberation Sans', sans-serif;font-size:22px;color:#000;font-weight:normal;font-style:normal;transform:scale(0.95,1.03);transform-origin:center 7.62px;">4</div>
<svg style="position:absolute;left:-11px;top:600px;" width="12" height="19" viewBox="0 0 12 19"><path d="M6.95 0.9 V17.1 M7.30 1.2 L2.20 5.9" fill="none" stroke="#000" stroke-width="2" stroke-linecap="butt"/></svg>
<div style="position:absolute;left:-493.95px;width:1000px;text-align:center;top:610.08px;line-height:0;white-space:pre;font-family:'Liberation Sans', sans-serif;font-size:22px;color:#000;font-weight:normal;font-style:normal;transform:scale(0.95,1.03);transform-origin:center 7.62px;">5</div>
<svg style="position:absolute;left:-11px;top:628px;" width="12" height="19" viewBox="0 0 12 19"><path d="M6.95 0.9 V17.1 M7.30 1.2 L2.20 5.9" fill="none" stroke="#000" stroke-width="2" stroke-linecap="butt"/></svg>
<div style="position:absolute;left:-493.95px;width:1000px;text-align:center;top:638.08px;line-height:0;white-space:pre;font-family:'Liberation Sans', sans-serif;font-size:22px;color:#000;font-weight:normal;font-style:normal;transform:scale(0.95,1.03);transform-origin:center 7.62px;">6</div>
<svg style="position:absolute;left:-11px;top:656px;" width="12" height="19" viewBox="0 0 12 19"><path d="M6.95 0.9 V17.1 M7.30 1.2 L2.20 5.9" fill="none" stroke="#000" stroke-width="2" stroke-linecap="butt"/></svg>
<div style="position:absolute;left:-493.95px;width:1000px;text-align:center;top:666.08px;line-height:0;white-space:pre;font-family:'Liberation Sans', sans-serif;font-size:22px;color:#000;font-weight:normal;font-style:normal;transform:scale(0.95,1.03);transform-origin:center 7.62px;">7</div>
<svg style="position:absolute;left:-11px;top:684px;" width="12" height="19" viewBox="0 0 12 19"><path d="M6.95 0.9 V17.1 M7.30 1.2 L2.20 5.9" fill="none" stroke="#000" stroke-width="2" stroke-linecap="butt"/></svg>
<div style="position:absolute;left:-493.95px;width:1000px;text-align:center;top:694.08px;line-height:0;white-space:pre;font-family:'Liberation Sans', sans-serif;font-size:22px;color:#000;font-weight:normal;font-style:normal;transform:scale(0.95,1.03);transform-origin:center 7.62px;">8</div>
<svg style="position:absolute;left:-11px;top:712px;" width="12" height="19" viewBox="0 0 12 19"><path d="M6.95 0.9 V17.1 M7.30 1.2 L2.20 5.9" fill="none" stroke="#000" stroke-width="2" stroke-linecap="butt"/></svg>
<div style="position:absolute;left:-493.95px;width:1000px;text-align:center;top:722.08px;line-height:0;white-space:pre;font-family:'Liberation Sans', sans-serif;font-size:22px;color:#000;font-weight:normal;font-style:normal;transform:scale(0.95,1.03);transform-origin:center 7.62px;">9</div>
<div style="position:absolute;left:-505.05px;width:1000px;text-align:center;top:750.08px;line-height:0;white-space:pre;font-family:'Liberation Sans', sans-serif;font-size:22px;color:#000;font-weight:normal;font-style:normal;transform:scale(0.95,1.03);transform-origin:center 7.62px;">2</div>
<div style="position:absolute;left:-493.95px;width:1000px;text-align:center;top:750.08px;line-height:0;white-space:pre;font-family:'Liberation Sans', sans-serif;font-size:22px;color:#000;font-weight:normal;font-style:normal;transform:scale(0.95,1.03);transform-origin:center 7.62px;">0</div>
<div style="position:absolute;left:-505.05px;width:1000px;text-align:center;top:778.08px;line-height:0;white-space:pre;font-family:'Liberation Sans', sans-serif;font-size:22px;color:#000;font-weight:normal;font-style:normal;transform:scale(0.95,1.03);transform-origin:center 7.62px;">2</div>
<svg style="position:absolute;left:0px;top:771px;" width="12" height="19" viewBox="0 0 12 19"><path d="M7.05 0.9 V17.1 M7.40 1.2 L2.30 5.9" fill="none" stroke="#000" stroke-width="2" stroke-linecap="butt"/></svg>
<div style="position:absolute;left:18px;top:167px;width:105px;height:31px;background:transparent;box-sizing:border-box;border:2px solid #217346;"></div>
<div style="position:absolute;left:118px;top:193px;width:6px;height:6px;background:#217346;border:1px solid #fff;box-sizing:content-box;left:117px;top:192px;"></div>
<div style="position:absolute;left:127.5px;top:228.66px;line-height:0;white-space:pre;font-family:'Liberation Serif', serif;font-size:48.4px;color:#c00000;font-weight:bold;font-style:normal;">ĐIỀU CHỈNH EBITDA</div>
<div style="position:absolute;right:301.5px;text-align:right;top:225.90px;line-height:0;white-space:pre;font-family:'Liberation Serif', serif;font-size:24px;color:#c00000;font-weight:bold;font-style:normal;">CÔNG TY CỔ PHẦN ĐÀO TẠO</div>
<div style="position:absolute;right:302px;text-align:right;top:255.90px;line-height:0;white-space:pre;font-family:'Liberation Serif', serif;font-size:24px;color:#c00000;font-weight:bold;font-style:normal;">CLEVERCFO</div>
<svg style="position:absolute;left:755px;top:198px;" width="80" height="60" viewBox="0 0 80 60"><path d="M4.6 5.3 H70.4 V33.5 Q70.4 45.5 37.4 54.6 Q4.6 45.5 4.6 33.5 Z" fill="#fff" stroke="#1a1a1a" stroke-width="3.2" stroke-linejoin="miter"/><path d="M14.5 17.6 L37.4 11.4 L60.7 17.6 Z" fill="#b5172f"/><rect x="15" y="18.6" width="45.5" height="1.3" fill="#d06a7a"/><text x="37.6" y="32.2" text-anchor="middle" font-family="Liberation Serif" font-weight="bold" font-size="16.5" fill="#b5172f" textLength="50.5" lengthAdjust="spacingAndGlyphs">CFO</text><path d="M13 38.7 L14.6 35.4 Q26 33.4 37.4 35.6 Q49 33.4 60.4 35.4 L62 38.7 Z" fill="#b5172f"/></svg>
<svg style="position:absolute;left:838px;top:200px;" width="256" height="46" viewBox="0 0 256 46"><text x="3.3" y="22.6" font-family="Liberation Serif" font-weight="bold" font-size="22.5" fill="#a8170d" textLength="247" lengthAdjust="spacingAndGlyphs">EDUCATION</text><text x="3.6" y="42" font-family="Liberation Sans" font-size="14.5" fill="#861515" stroke="#861515" stroke-width="0.55" textLength="242.5" lengthAdjust="spacing">www.clevercfo.com</text></svg>
<div style="position:absolute;left:650.5px;top:301.57px;line-height:0;white-space:pre;font-family:'Liberation Serif', serif;font-size:22px;color:#000;font-weight:bold;font-style:normal;">Giới thiệu:</div>
<div style="position:absolute;left:647px;top:314px;width:100px;height:1px;background:#000;"></div>
<div style="position:absolute;left:125px;top:329.57px;line-height:0;white-space:pre;font-family:'Liberation Serif', serif;font-size:22px;color:#000;font-weight:bold;font-style:normal;transform:scale(1,1.07);transform-origin:left 7.43px;">Lợi nhuận ròng</div>
<div style="position:absolute;right:1226px;text-align:right;top:329.57px;line-height:0;white-space:pre;font-family:'Liberation Serif', serif;font-size:22px;color:#000;font-weight:bold;font-style:normal;transform:scale(1,1.07);transform-origin:right 7.43px;">50,000</div>
<div style="position:absolute;left:125.5px;top:357.57px;line-height:0;white-space:pre;font-family:'Liberation Serif', serif;font-size:22px;color:#000;font-weight:normal;font-style:normal;transform:scale(1,1.07);transform-origin:left 7.43px;">Cộng thêm:</div>
<div style="position:absolute;left:161px;top:385.57px;line-height:0;white-space:pre;font-family:'Liberation Serif', serif;font-size:22px;color:#000;font-weight:normal;font-style:normal;transform:scale(1,1.07);transform-origin:left 7.43px;">Thuế</div>
<div style="position:absolute;right:1226px;text-align:right;top:385.57px;line-height:0;white-space:pre;font-family:'Liberation Serif', serif;font-size:22px;color:#000;font-weight:normal;font-style:normal;transform:scale(1,1.07);transform-origin:right 7.43px;">4,000</div>
<div style="position:absolute;left:161px;top:413.57px;line-height:0;white-space:pre;font-family:'Liberation Serif', serif;font-size:22px;color:#000;font-weight:normal;font-style:normal;transform:scale(1,1.07);transform-origin:left 7.43px;">Lãi vay</div>
<div style="position:absolute;right:1226px;text-align:right;top:413.57px;line-height:0;white-space:pre;font-family:'Liberation Serif', serif;font-size:22px;color:#000;font-weight:normal;font-style:normal;transform:scale(1,1.07);transform-origin:right 7.43px;">3,500</div>
<div style="position:absolute;left:161px;top:441.57px;line-height:0;white-space:pre;font-family:'Liberation Serif', serif;font-size:22px;color:#000;font-weight:normal;font-style:normal;transform:scale(1,1.07);transform-origin:left 7.43px;">Khấu hao và hao mòn</div>
<div style="position:absolute;right:1226px;text-align:right;top:441.57px;line-height:0;white-space:pre;font-family:'Liberation Serif', serif;font-size:22px;color:#000;font-weight:normal;font-style:normal;transform:scale(1,1.07);transform-origin:right 7.43px;">15,500</div>
<div style="position:absolute;left:121px;top:454px;width:436px;height:1px;background:#000;"></div>
<div style="position:absolute;left:132.5px;top:469.57px;line-height:0;white-space:pre;font-family:'Liberation Serif', serif;font-size:22px;color:#000;font-weight:bold;font-style:normal;transform:scale(1,1.07);transform-origin:left 7.43px;">EBITDA</div>
<div style="position:absolute;right:1226px;text-align:right;top:469.57px;line-height:0;white-space:pre;font-family:'Liberation Serif', serif;font-size:22px;color:#000;font-weight:bold;font-style:normal;transform:scale(1,1.07);transform-origin:right 7.43px;">73,000</div>
<div style="position:absolute;left:132.5px;top:497.57px;line-height:0;white-space:pre;font-family:'Liberation Serif', serif;font-size:22px;color:#000;font-weight:normal;font-style:normal;transform:scale(1,1.07);transform-origin:left 7.43px;">Cộng thêm:</div>
<div style="position:absolute;left:161px;top:525.58px;line-height:0;white-space:pre;font-family:'Liberation Serif', serif;font-size:22px;color:#000;font-weight:normal;font-style:normal;transform:scale(1,1.07);transform-origin:left 7.43px;">Suy giảm lợi thế thương mại</div>
<div style="position:absolute;right:1226px;text-align:right;top:525.58px;line-height:0;white-space:pre;font-family:'Liberation Serif', serif;font-size:22px;color:#000;font-weight:normal;font-style:normal;transform:scale(1,1.07);transform-origin:right 7.43px;">10,000</div>
<div style="position:absolute;left:161px;top:553.58px;line-height:0;white-space:pre;font-family:'Liberation Serif', serif;font-size:22px;color:#000;font-weight:normal;font-style:normal;transform:scale(1,1.07);transform-origin:left 7.43px;">Thu nhập từ bán tài sản</div>
<div style="position:absolute;right:1226px;text-align:right;top:553.58px;line-height:0;white-space:pre;font-family:'Liberation Serif', serif;font-size:22px;color:#000;font-weight:normal;font-style:normal;transform:scale(1,1.07);transform-origin:right 7.43px;">4,500</div>
<div style="position:absolute;left:161px;top:581.58px;line-height:0;white-space:pre;font-family:'Liberation Serif', serif;font-size:22px;color:#000;font-weight:normal;font-style:normal;transform:scale(1,1.07);transform-origin:left 7.43px;">Chi phí tranh chấp, kiện tụng</div>
<div style="position:absolute;right:1226px;text-align:right;top:581.58px;line-height:0;white-space:pre;font-family:'Liberation Serif', serif;font-size:22px;color:#000;font-weight:normal;font-style:normal;transform:scale(1,1.07);transform-origin:right 7.43px;">300</div>
<div style="position:absolute;left:161px;top:609.58px;line-height:0;white-space:pre;font-family:'Liberation Serif', serif;font-size:22px;color:#000;font-weight:normal;font-style:normal;transform:scale(1,1.07);transform-origin:left 7.43px;">Quyền chọn cổ phiếu</div>
<div style="position:absolute;right:1226px;text-align:right;top:609.58px;line-height:0;white-space:pre;font-family:'Liberation Serif', serif;font-size:22px;color:#000;font-weight:normal;font-style:normal;transform:scale(1,1.07);transform-origin:right 7.43px;">1,240</div>
<div style="position:absolute;left:161px;top:637.58px;line-height:0;white-space:pre;font-family:'Liberation Serif', serif;font-size:22px;color:#000;font-weight:normal;font-style:normal;transform:scale(1,1.07);transform-origin:left 7.43px;">Lỗ tỷ giá hối đoái do đánh giá lại</div>
<div style="position:absolute;right:1226px;text-align:right;top:637.58px;line-height:0;white-space:pre;font-family:'Liberation Serif', serif;font-size:22px;color:#000;font-weight:normal;font-style:normal;transform:scale(1,1.07);transform-origin:right 7.43px;">1,800</div>
<div style="position:absolute;left:121px;top:650px;width:436px;height:29px;background:#c00000;"></div>
<div style="position:absolute;left:121px;top:650px;width:436px;height:1px;background:#000;"></div>
<div style="position:absolute;left:125px;top:665.58px;line-height:0;white-space:pre;font-family:'Liberation Serif', serif;font-size:22px;color:#fff;font-weight:bold;font-style:normal;transform:scale(1,1.07);transform-origin:left 7.43px;">EBITDA điều chỉnh</div>
<div style="position:absolute;right:1226px;text-align:right;top:665.58px;line-height:0;white-space:pre;font-family:'Liberation Serif', serif;font-size:22px;color:#fff;font-weight:bold;font-style:normal;transform:scale(1,1.07);transform-origin:right 7.43px;">90,840</div>
<div style="position:absolute;left:663px;top:330px;width:993px;height:419px;background:#fff;box-sizing:border-box;border:2px solid #b4b4b4;"></div>
<div style="position:absolute;left:678.5px;top:351.77px;line-height:0;white-space:pre;font-family:'Liberation Serif', serif;font-size:22px;color:#000;font-weight:normal;font-style:normal;transform:scale(1,1.07);transform-origin:left 7.43px;">- EBITDA là thuật ngữ được viết tắt từ cụm từ Earnings Before Interest, Taxes, Depreciation and</div>
<div style="position:absolute;left:678.5px;top:377.02px;line-height:0;white-space:pre;font-family:'Liberation Serif', serif;font-size:22px;color:#000;font-weight:normal;font-style:normal;transform:scale(1,1.07);transform-origin:left 7.43px;">Amortization trong tiếng Anh, tạm dịch là thu nhập trước lãi vay, thuế và khấu hao. Đây là thước đo hiệu</div>
<div style="position:absolute;left:678.5px;top:402.27px;line-height:0;white-space:pre;font-family:'Liberation Serif', serif;font-size:22px;color:#000;font-weight:normal;font-style:normal;transform:scale(1,1.07);transform-origin:left 7.43px;">quả tài chính tổng thể của công ty, được sử dụng thay thế cho thu nhập đơn thuần hoặc thu nhập ròng trong</div>
<div style="position:absolute;left:678.5px;top:427.52px;line-height:0;white-space:pre;font-family:'Liberation Serif', serif;font-size:22px;color:#000;font-weight:normal;font-style:normal;transform:scale(1,1.07);transform-origin:left 7.43px;">một số trường hợp.</div>
<div style="position:absolute;left:678.5px;top:452.77px;line-height:0;white-space:pre;font-family:'Liberation Serif', serif;font-size:22px;color:#000;font-weight:normal;font-style:normal;transform:scale(1,1.07);transform-origin:left 7.43px;">- EBITDA về cơ bản là thu nhập hoặc thu nhập ròng với lãi suất, thuế, khấu hao và được sử dụng để phân</div>
<div style="position:absolute;left:678.5px;top:478.02px;line-height:0;white-space:pre;font-family:'Liberation Serif', serif;font-size:22px;color:#000;font-weight:normal;font-style:normal;transform:scale(1,1.07);transform-origin:left 7.43px;">tích, so sánh lợi nhuận giữa các công ty và ngành công nghiệp, vì nó có thể loại bỏ các tác động tìa chính và</div>
<div style="position:absolute;left:678.5px;top:503.27px;line-height:0;white-space:pre;font-family:'Liberation Serif', serif;font-size:22px;color:#000;font-weight:normal;font-style:normal;transform:scale(1,1.07);transform-origin:left 7.43px;">chi tiêu vốn.</div>
<div style="position:absolute;left:678.5px;top:528.53px;line-height:0;white-space:pre;font-family:'Liberation Serif', serif;font-size:22px;color:#000;font-weight:normal;font-style:normal;transform:scale(1,1.07);transform-origin:left 7.43px;">- EBITDA được điều chỉnh là một số liệu tài chính chuẩn hóa, loại trừ tất cả các khoản mục một lần, không</div>
<div style="position:absolute;left:678.5px;top:553.78px;line-height:0;white-space:pre;font-family:'Liberation Serif', serif;font-size:22px;color:#000;font-weight:normal;font-style:normal;transform:scale(1,1.07);transform-origin:left 7.43px;">thường xuyên và không định kỳ. Nó thường được sử dụng trong định giá bởi các nhà phân tích tài chính và</div>
<div style="position:absolute;left:678.5px;top:579.03px;line-height:0;white-space:pre;font-family:'Liberation Serif', serif;font-size:22px;color:#000;font-weight:normal;font-style:normal;transform:scale(1,1.07);transform-origin:left 7.43px;">các chuyên gia trong lĩnh vực tài chính doanh nghiệp vì nó phản ánh hoạt động tài chính của một doanh</div>
<div style="position:absolute;left:678.5px;top:604.28px;line-height:0;white-space:pre;font-family:'Liberation Serif', serif;font-size:22px;color:#000;font-weight:normal;font-style:normal;transform:scale(1,1.07);transform-origin:left 7.43px;">nghiệp mà không bị ảnh hưởng bởi các khoản lãi, lỗ không thường xuyên hoặc các giao dịch khác. Mặc dù</div>
<div style="position:absolute;left:678.5px;top:629.53px;line-height:0;white-space:pre;font-family:'Liberation Serif', serif;font-size:22px;color:#000;font-weight:normal;font-style:normal;transform:scale(1,1.07);transform-origin:left 7.43px;">việc tính toán EBITDA điều chỉnh có thể thay đổi phần lớn theo ngành, dưới đây là danh sách các khoản</div>
<div style="position:absolute;left:678.5px;top:654.78px;line-height:0;white-space:pre;font-family:'Liberation Serif', serif;font-size:22px;color:#000;font-weight:normal;font-style:normal;transform:scale(1,1.07);transform-origin:left 7.43px;">mục phổ biến bị loại trừ khỏi EBITDA để có được EBITDA đã điều chỉnh.</div>
<div style="position:absolute;left:0px;top:789px;width:1773px;height:34px;background:#e6e6e6;"></div>
<div style="position:absolute;left:0px;top:789px;width:1773px;height:1px;background:#a4a4a4;"></div>
<div style="position:absolute;left:0px;top:823px;width:1773px;height:1px;background:#b8b8b8;"></div>
<svg style="position:absolute;left:11px;top:799px;" width="8" height="13" viewBox="0 0 8 13"><path d="M7 0 V12 L0 6 Z" fill="#c0c0c0"/></svg>
<svg style="position:absolute;left:46px;top:799px;" width="8" height="13" viewBox="0 0 8 13"><path d="M0 0 V12 L7 6 Z" fill="#c0c0c0"/></svg>
<div style="position:absolute;left:101px;top:789px;width:95px;height:31px;background:#fff;box-sizing:border-box;border-left:1px solid #a4a4a4;border-right:1px solid #a4a4a4;"></div>
<div style="position:absolute;left:101px;top:818px;width:95px;height:2px;background:#217346;"></div>
<div style="position:absolute;left:-351px;width:1000px;text-align:center;top:803.92px;line-height:0;white-space:pre;font-family:'Liberation Sans', sans-serif;font-size:19px;color:#217346;font-weight:bold;font-style:normal;transform:scale(1.0,1);transform-origin:center 6.58px;">EBITDA</div>
<svg style="position:absolute;left:234px;top:794px;" width="24" height="24" viewBox="0 0 24 24"><circle cx="12" cy="12" r="10.5" fill="none" stroke="#777" stroke-width="1.4"/><path d="M12 6.5 V17.5 M6.5 12 H17.5" stroke="#666" stroke-width="1.8"/></svg>
<div style="position:absolute;left:1131px;top:798px;width:3px;height:3px;background:#a8a8a8;"></div>
<div style="position:absolute;left:1131px;top:803px;width:3px;height:3px;background:#a8a8a8;"></div>
<div style="position:absolute;left:1131px;top:809px;width:3px;height:3px;background:#a8a8a8;"></div>
<div style="position:absolute;left:1151px;top:793px;width:542px;height:25px;background:#fff;box-sizing:border-box;border:1px solid #acacac;"></div>
<div style="position:absolute;left:1175px;top:793px;width:2px;height:25px;background:#acacac;"></div>
<svg style="position:absolute;left:1159px;top:800px;" width="8" height="12" viewBox="0 0 8 12"><path d="M7 0 V11 L0 5.5 Z" fill="#6f6f6f"/></svg>
<div style="position:absolute;left:1693px;top:793px;width:80px;height:25px;background:#d9d9d9;"></div>
<div style="position:absolute;left:0px;top:824px;width:1773px;height:27px;background:#f3f2f1;"></div>
<div style="position:absolute;left:1458px;top:824px;width:60px;height:27px;background:#c8c6c4;"></div>
<svg style="position:absolute;left:1476px;top:828px;" width="24" height="24" viewBox="0 0 24 24"><rect x="2.4" y="2.4" width="18.2" height="18.2" fill="none" stroke="#2b2b2b" stroke-width="1.8"/><path d="M8.5 2 V21 M14.5 2 V21 M2 8.5 H21 M2 14.5 H21" stroke="#2b2b2b" stroke-width="1.8"/></svg>
<svg style="position:absolute;left:1536px;top:828px;" width="24" height="24" viewBox="0 0 24 24"><rect x="2" y="2.4" width="20" height="18.2" fill="none" stroke="#444" stroke-width="1.5"/><rect x="5.6" y="5.6" width="12.6" height="11.8" fill="none" stroke="#444" stroke-width="1.3"/><path d="M8.4 8.6 H15.4 M8.4 11.4 H15.4 M8.4 14.2 H15.4" stroke="#444" stroke-width="1.2"/></svg>
<svg style="position:absolute;left:1596px;top:828px;" width="24" height="24" viewBox="0 0 24 24"><rect x="2" y="2.4" width="20" height="18.2" fill="none" stroke="#444" stroke-width="1.5"/><path d="M2 11.4 H13.4 V2.4 M7.8 2.4 V11.4" fill="none" stroke="#444" stroke-width="1.3"/></svg>
<div style="position:absolute;left:1646px;top:839px;width:11px;height:1.2px;background:#555;"></div>
<div style="position:absolute;left:1666px;top:839px;width:107px;height:1.6px;background:#a8a8a8;"></div>
<div style="position:absolute;left:1736px;top:831px;width:8px;height:17px;background:#6f6f6f;"></div>
</body></html>
